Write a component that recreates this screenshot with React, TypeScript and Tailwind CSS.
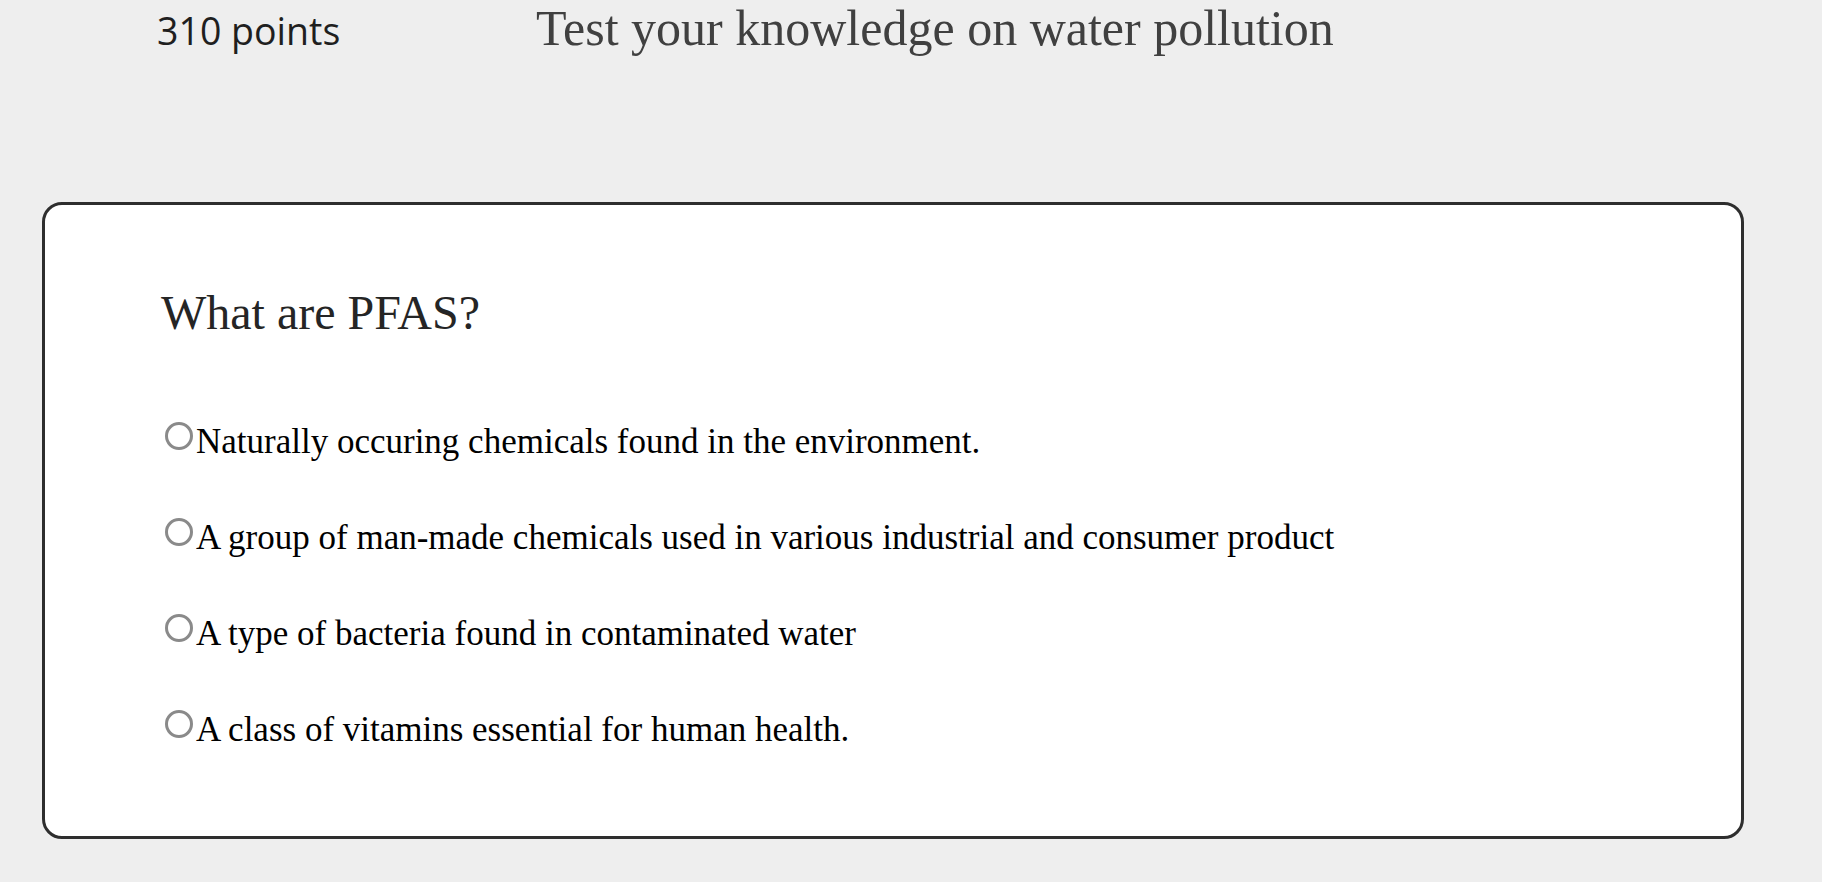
const options = [
  "Naturally occuring chemicals found in the environment.",
  "A group of man-made chemicals used in various industrial and consumer product",
  "A type of bacteria found in contaminated water",
  "A class of vitamins essential for human health.",
];

export default function App() {
  return (
    <div className="min-h-screen w-full bg-[#eeeeee] pb-10">
      {/* Header */}
      <header className="flex items-baseline pl-[157px]">
        <div className="w-[379px] shrink-0 font-['Open_Sans',sans-serif] text-[37.5px] text-[#1f1f1f]">
          310 points
        </div>
        <h1 className="font-['Liberation_Serif',serif] text-[50px] font-normal leading-[57px] text-[#404040]">
          Test your knowledge on water pollution
        </h1>
      </header>

      {/* Question card */}
      <section className="ml-[42px] mt-[143px] w-[1702px] rounded-[20px] border-[3px] border-[#2e2e2e] bg-white pb-[86px] pl-[116px] pt-[80px] font-['Liberation_Serif',serif]">
        <h2 className="text-[48px] font-normal leading-[55px] text-[#252525]">What are PFAS?</h2>

        <div className="mt-[82px] flex flex-col gap-[56px]">
          {options.map((opt, i) => (
            <label key={i} className="flex items-start text-[35px] leading-[40px] text-black">
              <input
                type="radio"
                name="pfas"
                className="ml-[4px] mr-[3px] mt-[0px] h-[28px] w-[28px] shrink-0 appearance-none rounded-full border-[3px] border-[#8a8a8a] bg-white"
              />
              <span>{opt}</span>
            </label>
          ))}
        </div>
      </section>
    </div>
  );
}
